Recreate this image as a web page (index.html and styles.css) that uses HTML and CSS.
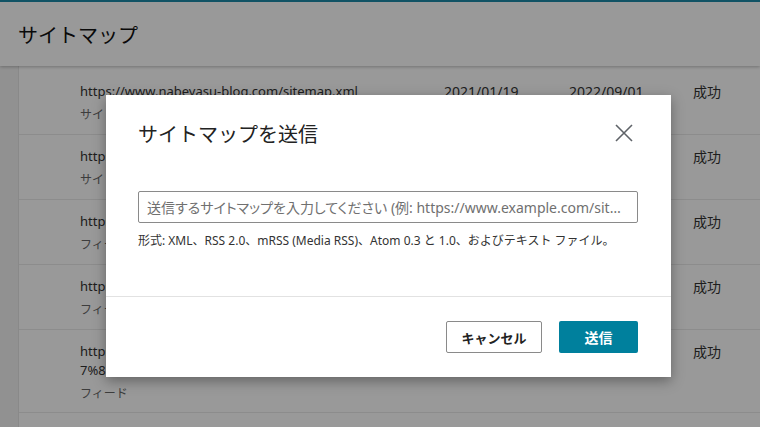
FILE: index.html
```html
<!DOCTYPE html>
<html lang="ja">
<head>
    <meta charset="UTF-8">
    <meta name="viewport" content="width=device-width, initial-scale=1.0">
    <title>サイトマップ</title>
    <link rel="stylesheet" href="styles.css">
</head>
<body>
    <header class="page-header">
        <h1>サイトマップ</h1>
    </header>

    <div class="page">
        <div class="side"></div>

        <!-- 送信済みサイトマップ一覧 -->
        <div class="list">
            <div class="row">
                <div class="cell url">https://www.nabeyasu-blog.com/sitemap.xml<span class="type">サイトマップ</span></div>
                <div class="cell">2021/01/19</div>
                <div class="cell">2022/09/01</div>
                <div class="cell">成功</div>
            </div>
            <div class="row">
                <div class="cell url">https://www.nabeyasu-blog.com/sitemap.xml<span class="type">サイトマップ</span></div>
                <div class="cell"></div>
                <div class="cell"></div>
                <div class="cell">成功</div>
            </div>
            <div class="row">
                <div class="cell url">https://www.nabeyasu-blog.com/feed<span class="type">フィード</span></div>
                <div class="cell"></div>
                <div class="cell"></div>
                <div class="cell">成功</div>
            </div>
            <div class="row">
                <div class="cell url">https://www.nabeyasu-blog.com/rss<span class="type">フィード</span></div>
                <div class="cell"></div>
                <div class="cell"></div>
                <div class="cell">成功</div>
            </div>
            <div class="row row-tall">
                <div class="cell url">https://www.nabeyasu-blog.com/category/%E3%8<br>7%8F/feed<span class="type">フィード</span></div>
                <div class="cell"></div>
                <div class="cell"></div>
                <div class="cell">成功</div>
            </div>
        </div>
    </div>

    <!-- 送信ダイアログ -->
    <div class="backdrop"></div>
    <div class="dialog">
        <div class="dialog-head">
            <h2>サイトマップを送信</h2>
            <button class="close" aria-label="閉じる">
                <svg width="18" height="18" viewBox="0 0 18 18">
                    <path d="M1 1 L17 17 M17 1 L1 17" stroke="#5f6368" stroke-width="1.6" fill="none"/>
                </svg>
            </button>
        </div>
        <div class="dialog-body">
            <input class="field" type="text" placeholder="送信するサイトマップを入力してください (例: https://www.example.com/sitemap.xml)">
            <p class="hint">形式: XML、RSS 2.0、mRSS (Media RSS)、Atom 0.3 と 1.0、およびテキスト ファイル。</p>
        </div>
        <div class="dialog-foot">
            <button class="btn btn-cancel">キャンセル</button>
            <button class="btn btn-submit">送信</button>
        </div>
    </div>
</body>
</html>
```

FILE: styles.css
```css
body {
    margin: 0;
    width: 760px;
    height: 427px;
    overflow: hidden;
    font-family: "Noto Sans", "Noto Sans CJK JP", sans-serif;
    background-color: #fff;
    color: #222;
}

.page-header {
    height: 64px;
    border-top: 2px solid #1d8aa8;
    background-color: #fff;
    box-shadow: 0 1px 3px rgba(0, 0, 0, 0.25);
    display: flex;
    align-items: center;
    padding-left: 18px;
    position: relative;
}

.page-header h1 {
    margin: 0;
    font-size: 20px;
    font-weight: 400;
    color: #111;
}

.page {
    display: flex;
    height: 361px;
}

.side {
    width: 18px;
    background-color: #f2f2f2;
    border-right: 1px solid #e4e4e4;
}

.list {
    flex: 1;
    padding-top: 4px;
}

.row {
    display: grid;
    grid-template-columns: 364px 125px 124px 1fr;
    padding: 12px 0 10px 61px;
    height: 42px;
    border-bottom: 1px solid #eaeaea;
    font-size: 14px;
    line-height: 19px;
    color: #333;
}

.row-tall {
    height: 60px;
}

.url {
    font-size: 13px;
    white-space: nowrap;
}

.type {
    display: block;
    margin-top: 4px;
    font-size: 12px;
    color: #666;
}

/* 画面全体を暗くする */
.backdrop {
    position: absolute;
    inset: 0;
    background-color: rgba(0, 0, 0, 0.4);
}

.dialog {
    position: absolute;
    left: 106px;
    top: 95px;
    width: 565px;
    height: 282px;
    background-color: #fff;
    box-shadow: 0 4px 12px rgba(0, 0, 0, 0.35);
    display: flex;
    flex-direction: column;
}

.dialog-head {
    display: flex;
    justify-content: space-between;
    align-items: center;
    padding: 24px 38px 0 32px;
    height: 28px;
}

.dialog-head h2 {
    margin: 0;
    font-size: 20px;
    font-weight: 400;
    color: #222;
}

.close {
    border: none;
    background: none;
    padding: 0;
    width: 18px;
    height: 18px;
    cursor: pointer;
}

.dialog-body {
    padding: 44px 33px 0 32px;
    height: 105px;
    border-bottom: 1px solid #e2e2e2;
}

.field {
    display: block;
    box-sizing: border-box;
    width: 500px;
    height: 32px;
    border: 1px solid #8a8a8a;
    border-radius: 2px;
    padding: 0 14px 0 8px;
    font-family: inherit;
    font-size: 14px;
    font-feature-settings: "palt";
    text-overflow: ellipsis;
}

.field::placeholder {
    color: #707070;
}

.hint {
    margin: 10px 0 0;
    font-size: 12px;
    line-height: 16px;
    color: #333;
}

.dialog-foot {
    display: flex;
    justify-content: flex-end;
    gap: 17px;
    padding: 24px 33px 0;
}

.btn {
    height: 32px;
    border-radius: 2px;
    font-family: inherit;
    font-size: 13px;
    font-weight: 700;
    cursor: pointer;
}

.btn-cancel {
    width: 96px;
    background-color: #fff;
    border: 1px solid #8a8a8a;
    color: #222;
}

.btn-submit {
    width: 79px;
    background-color: #00809d;
    border: none;
    color: #fff;
    font-size: 14px;
}
```
